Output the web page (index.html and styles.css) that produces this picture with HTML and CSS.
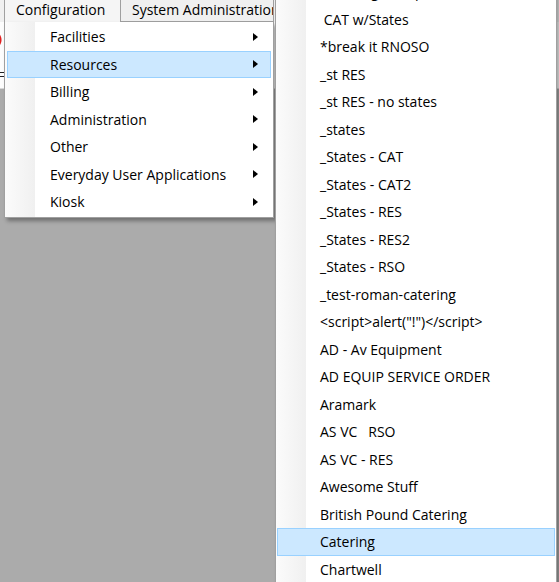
FILE: index.html
```html
<!DOCTYPE html>
<html>
<head>
<meta charset="utf-8">
<link rel="stylesheet" href="styles.css">
</head>
<body>
<div class="app">
  <div class="menubar">
    <div class="tab tab-active">Configuration</div>
    <div class="tab tab-sys">System Administration</div>
  </div>
  <div class="toolbar">
    <div class="tool">
      <svg class="tool-icon" width="24" height="24" viewBox="0 0 24 24"><path d="M4 12a8 8 0 1 1 3 6.2" fill="none" stroke="#e02020" stroke-width="3"/><path d="M2 16l5 3 1-6z" fill="#e02020"/></svg>
      <span class="tool-label">F</span>
    </div>
  </div>
  <div class="workspace"></div>

  <div class="menu menu-main">
    <div class="item"><span>Facilities</span><svg class="arrow" width="5" height="8" viewBox="0 0 5 8"><path d="M0 0L5 4L0 8Z"/></svg></div>
    <div class="item item-hot"><span>Resources</span><svg class="arrow" width="5" height="8" viewBox="0 0 5 8"><path d="M0 0L5 4L0 8Z"/></svg></div>
    <div class="item"><span>Billing</span><svg class="arrow" width="5" height="8" viewBox="0 0 5 8"><path d="M0 0L5 4L0 8Z"/></svg></div>
    <div class="item"><span>Administration</span><svg class="arrow" width="5" height="8" viewBox="0 0 5 8"><path d="M0 0L5 4L0 8Z"/></svg></div>
    <div class="item"><span>Other</span><svg class="arrow" width="5" height="8" viewBox="0 0 5 8"><path d="M0 0L5 4L0 8Z"/></svg></div>
    <div class="item"><span>Everyday User Applications</span><svg class="arrow" width="5" height="8" viewBox="0 0 5 8"><path d="M0 0L5 4L0 8Z"/></svg></div>
    <div class="item"><span>Kiosk</span><svg class="arrow" width="5" height="8" viewBox="0 0 5 8"><path d="M0 0L5 4L0 8Z"/></svg></div>
  </div>

  <div class="menu menu-sub">
    <div class="item"><span> Catering Group</span></div>
    <div class="item"><span> CAT w/States</span></div>
    <div class="item"><span>*break it RNOSO</span></div>
    <div class="item"><span>_st RES</span></div>
    <div class="item"><span>_st RES - no states</span></div>
    <div class="item"><span>_states</span></div>
    <div class="item"><span>_States - CAT</span></div>
    <div class="item"><span>_States - CAT2</span></div>
    <div class="item"><span>_States - RES</span></div>
    <div class="item"><span>_States - RES2</span></div>
    <div class="item"><span>_States - RSO</span></div>
    <div class="item"><span>_test-roman-catering</span></div>
    <div class="item"><span>&lt;script&gt;alert("!")&lt;/script&gt;</span></div>
    <div class="item"><span>AD - Av Equipment</span></div>
    <div class="item"><span>AD EQUIP SERVICE ORDER</span></div>
    <div class="item"><span>Aramark</span></div>
    <div class="item"><span>AS VC   RSO</span></div>
    <div class="item"><span>AS VC - RES</span></div>
    <div class="item"><span>Awesome Stuff</span></div>
    <div class="item"><span>British Pound Catering</span></div>
    <div class="item item-hot"><span>Catering</span></div>
    <div class="item"><span>Chartwell</span></div>
  </div>
</div>
</body>
</html>
```

FILE: styles.css
```css
html, body {
  margin: 0;
  padding: 0;
  width: 559px;
  height: 582px;
  overflow: hidden;
  background: #ababab;
  font-family: "Open Sans", "Noto Sans", sans-serif;
  font-size: 14px;
  color: #000;
}

.app {
  position: relative;
  width: 559px;
  height: 582px;
  overflow: hidden;
  display: flex;
  flex-direction: column;
}

.menubar {
  height: 22px;
  background: #f0f0f0;
  display: flex;
  flex: none;
}

.tab {
  box-sizing: border-box;
  height: 22px;
  line-height: 20px;
  padding-left: 11px;
  white-space: nowrap;
  overflow: hidden;
}

.tab-active {
  margin-left: 4px;
  width: 117px;
  border-left: 1px solid #a0a0a0;
  border-right: 1px solid #a0a0a0;
  background: #f5f5f5;
}

.tab-sys {
  width: 153px;
  border-right: 1px solid #a0a0a0;
  border-bottom: 1px solid #a0a0a0;
  background: #f0f0f0;
}

.toolbar {
  height: 66px;
  flex: none;
  background: #fdfdfd;
  border-bottom: 1px solid #d8d8d8;
  display: flex;
}

.tool {
  margin-left: -21px;
  width: 25px;
  display: flex;
  flex-direction: column;
  align-items: flex-end;
  padding-top: 6px;
}

.tool-icon {
  display: block;
}

.tool-label {
  margin-top: 18px;
  font-family: "Liberation Sans", sans-serif;
  font-size: 13px;
  line-height: 14px;
  color: #222;
  margin-right: -1px;
}

.workspace {
  flex: 1;
  background: #ababab;
}

.menu {
  position: absolute;
  box-sizing: border-box;
  border: 1px solid #a0a0a0;
  background: linear-gradient(90deg, #fbfbfb 0px, #f0f0f0 30px, #ffffff 30px);
  box-shadow: 3px 3px 4px rgba(0, 0, 0, 0.35);
  padding: 1px 2px;
}

.menu-main {
  left: 4px;
  top: 22px;
  width: 270px;
  border-top: none;
  z-index: 2;
}

.menu-sub {
  left: 275px;
  top: -24px;
  width: 282px;
  min-height: 620px;
  padding: 1px 1px;
  z-index: 3;
}

.item {
  box-sizing: border-box;
  height: 27.5px;
  display: flex;
  align-items: center;
  justify-content: space-between;
  padding-left: 42px;
  padding-right: 12px;
  white-space: pre;
  border: 1px solid transparent;
}

.item-hot {
  background: #cce8ff;
  border-color: #99d1ff;
}

.arrow {
  display: block;
  fill: #000;
}
```
